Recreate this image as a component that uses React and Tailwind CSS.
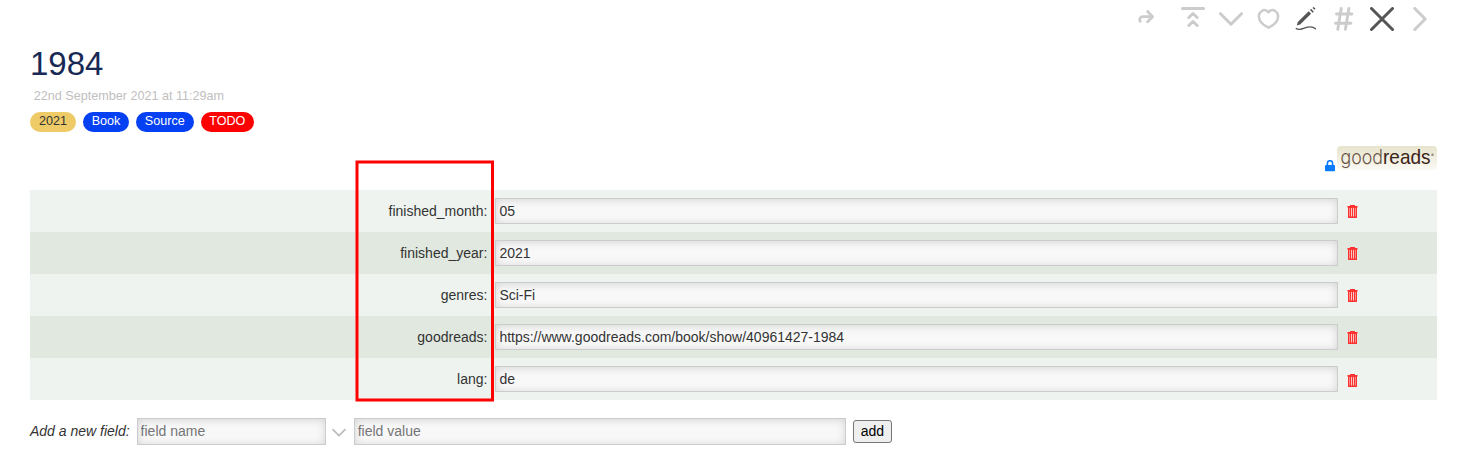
const fields = [
  { name: 'finished_month', value: '05' },
  { name: 'finished_year', value: '2021' },
  { name: 'genres', value: 'Sci-Fi' },
  { name: 'goodreads', value: 'https://www.goodreads.com/book/show/40961427-1984' },
  { name: 'lang', value: 'de' },
];

const tags = [
  { label: '2021', style: 'bg-[#eecb67] text-[#333333] w-[46px]' },
  { label: 'Book', style: 'bg-[#0540f2] text-white w-[46px]' },
  { label: 'Source', style: 'bg-[#0540f2] text-white w-[57.6px]' },
  { label: 'TODO', style: 'bg-[#ff0000] text-white w-[53.4px]' },
];

const inputStyle =
  'block border border-[#cccccc] bg-[#f8f8f8] shadow-[inset_0_1px_8px_rgba(0,0,0,0.15)] px-[3px] text-[14px] leading-[20px] text-[#333333] placeholder:text-[#757575] outline-none';

function Icon({ children, color = 'text-[#cccccc]', className = '', width = 3 }) {
  return (
    <svg
      viewBox="0 0 24 24"
      className={`h-6 w-6 shrink-0 ${color} ${className}`}
      fill="none"
      stroke="currentColor"
      strokeWidth={width}
      strokeLinecap="round"
      strokeLinejoin="round"
    >
      {children}
    </svg>
  );
}

function Toolbar() {
  return (
    <div className="flex h-[38px] justify-end gap-[13.8px] pt-[7px] pr-[5px]">
      <Icon className="mr-[9px]" width={2.8}>
        <path d="M6.2 14.4C5 12 6.2 9.7 9 9.7H18.5M13.6 4.6l5 5.1-5 5.1" />
      </Icon>
      <Icon>
        <path d="M1.5 1.5h21M7.8 10.5L12 6.5l4.2 4M7.8 18.5l4.2-4 4.2 4" />
      </Icon>
      <Icon>
        <path d="M1.5 6.7L12 17.2 22.5 6.7" />
      </Icon>
      <Icon width={2.5}>
        <path d="M11.5 5.2C9.5 2.8 6.7 2.7 4.5 4.2 1.4 6.2 .9 11 4 15.3 6.1 18 8.8 19.3 11.5 20.7c2.7-1.4 5.4-2.7 7.5-5.4 3.1-4.3 2.6-9.1-.5-11.1-2.2-1.5-5-1.4-7 1Z" />
      </Icon>
      <Icon color="text-[#555555]" width={1.5}>
        <g transform="translate(-.7 .2)">
          <path d="M2.5 18.4l1-3.6L14.4 4.1l2.4 2.4L5.8 17.3Z" fill="currentColor" stroke="none" />
          <path d="M16.2 2.2l2.8 2.8M18.8.2l1.9 1.9" strokeWidth="1.6" strokeLinecap="butt" />
          <path d="M2 21.4C4.8 23 7.5 22 10 21c4-1.6 7.8-2.3 11.2.5" strokeWidth="1.4" />
        </g>
      </Icon>
      <Icon width={2.9}>
        <path d="M9.2 1.5L5.8 22.3M16.9 1.5l-3.5 20.8M4.5 7h15.4M3.5 16.3h15.4" />
      </Icon>
      <Icon color="text-[#555555]">
        <path d="M1.5 1.5l21 21M22.5 1.5l-21 21" />
      </Icon>
      <Icon>
        <path d="M6.8 1.5L17.2 12 6.8 22.5" />
      </Icon>
    </div>
  );
}

function Trash() {
  return (
    <svg viewBox="0 0 11 13" className="h-[13px] w-[11px] shrink-0">
      <path d="M3 1V0h5v1h2v12H1V1Z" fill="#ff3232" />
      <path d="M0 1h11v1.5H0Z" fill="#ff3232" fillOpacity=".55" />
      <path d="M2.5 3v8.5M8.5 3v8.5" stroke="#fb8a86" strokeWidth="1" />
      <path d="M4.5 3v8.5M6.5 3v8.5" stroke="#f5dcd8" strokeWidth=".9" />
    </svg>
  );
}

function Lock() {
  return (
    <svg viewBox="0 0 10 12" className="mt-[14px] h-3 w-[10px]" fill="none">
      <path d="M2.4 6V3.3a2.6 2.6 0 0 1 5.2 0V6" stroke="#0a7bff" strokeWidth="1.6" />
      <rect y="4.9" width="10" height="6.4" rx=".8" fill="#0a7bff" />
    </svg>
  );
}

function Goodreads() {
  return (
    <svg viewBox="0 0 100 24" className="h-6 w-[100px] overflow-visible">
      <defs>
        <linearGradient id="badge" x1="0" y1="0" x2="0" y2="1">
          <stop offset="0" stopColor="#e7e4cd" />
          <stop offset="1" stopColor="#fbfaf4" />
        </linearGradient>
      </defs>
      <rect width="100" height="24" rx="4" fill="url(#badge)" />
      <text x="3.5" y="17.5" fontSize="20" fontFamily="Inter, sans-serif" fontWeight="300" fill="#6b5648" textLength="42.5" lengthAdjust="spacingAndGlyphs">good</text>
      <text x="46" y="17.5" fontSize="21" fontFamily="Liberation Sans, sans-serif" fill="#3b2418" textLength="47.5" lengthAdjust="spacingAndGlyphs">reads</text>
      <circle cx="95.5" cy="8.8" r="1.2" fill="#94877c" />
    </svg>
  );
}

export default function App() {
  return (
    <main className="relative h-[465px] w-[1478px] overflow-hidden bg-white pr-[41px] pl-[30px] font-['Liberation_Sans',Arial,sans-serif] text-[14px] text-[#333333]">
      <Toolbar />
      <h1 className="h-[50px] text-[33px] leading-[52px] text-[#182955]">1984</h1>
      <p className="h-6 pl-[3.8px] text-[12.6px] leading-4 text-[#c0c0c0]">22nd September 2021 at 11:29am</p>
      <div className="flex h-[34px] gap-[7px]">
        {tags.map((tag) => (
          <span key={tag.label} className={`h-5 rounded-full text-center text-[12.6px] leading-[18px] ${tag.style}`}>
            {tag.label}
          </span>
        ))}
      </div>
      <div className="flex h-11 justify-end gap-[2px]">
        <Lock />
        <Goodreads />
      </div>
      <div>
        {fields.map((field) => (
          <div key={field.name} className="group flex h-[42px] items-center odd:bg-[#eef3ef] even:bg-[#e0e8df]">
            <label className="w-[457.4px] text-right">{field.name}:</label>
            <input className={`${inputStyle} ml-[7.6px] h-[26px] w-[843px] pl-[3.4px]`} defaultValue={field.value} />
            <button className="ml-[9px] group-last:pt-[2px]" aria-label={`Delete ${field.name}`}>
              <Trash />
            </button>
          </div>
        ))}
      </div>
      <div className="flex items-center pt-[18px]">
        <em className="w-[106.6px]">Add a new field:</em>
        <input className={`${inputStyle} h-[27px] w-[189.4px] pb-[2px]`} placeholder="field name" />
        <svg viewBox="0 0 14 14" className="mr-[7.6px] ml-[6.1px] h-[14px] w-[14px]" fill="none" stroke="#bbbbbb" strokeWidth="1.7" strokeLinecap="round" strokeLinejoin="round">
          <path d="M1 4.6l6 6 6-6" />
        </svg>
        <input className={`${inputStyle} h-[27px] w-[492px] pb-[2px]`} placeholder="field value" />
        <button className="ml-[7.3px] h-[23px] w-[39px] rounded-[3px] border border-[#767676] bg-[#efefef] pb-px text-center leading-[20px] text-black">add</button>
      </div>
      <svg className="pointer-events-none absolute top-[160px] left-[355px] h-[242px] w-[140px]" fill="none">
        <rect x="2" y="2" width="135.5" height="238" stroke="#ff0000" strokeWidth="3" />
      </svg>
    </main>
  );
}
